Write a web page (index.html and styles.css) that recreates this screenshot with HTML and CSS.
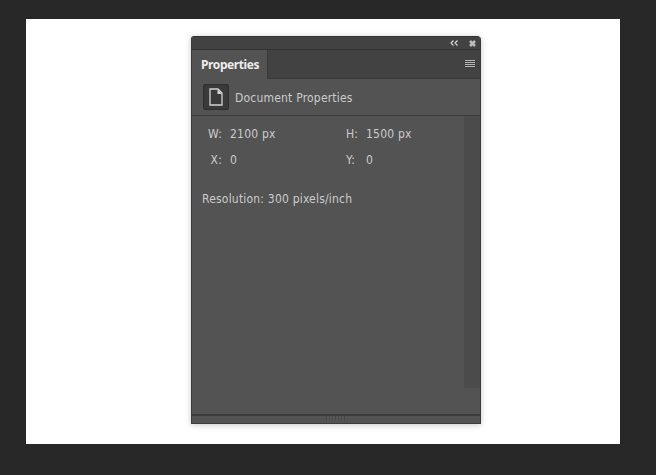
FILE: index.html
```html
<!DOCTYPE html>
<html lang="en">
<head>
<meta charset="utf-8">
<title>Properties</title>
<link rel="stylesheet" href="styles.css">
</head>
<body>
<main class="canvas">
  <section class="panel">
    <div class="titlebar">
      <svg class="ico" width="8" height="6" viewBox="0 0 8 6"><path d="M3.500 .5 1 3l2.500 2.500M7.500 .5 5 3l2.500 2.500" fill="none" stroke="#d8d8d8" stroke-width="1.2"/></svg>
      <svg class="ico" width="7" height="7" viewBox="0 0 7 7"><path d="M1 1l5 5M6 1 1 6" fill="none" stroke="#bdbdbd" stroke-width="2.500"/></svg>
    </div>
    <div class="tabs">
      <div class="tab">Properties</div>
      <svg class="menu" width="10" height="8" viewBox="0 0 10 8"><path d="M0 .5h10M0 2.500h10M0 4.500h10M0 6.500h10" stroke="#b4b4b4" stroke-width="1"/></svg>
    </div>
    <div class="head">
      <div class="docicon">
        <svg width="14" height="18" viewBox="0 0 14 18"><path d="M1 1h8l4 4v12H1z" fill="none" stroke="#d2d2d2" stroke-width="1.300"/><path d="M8.500 1v5h4.500z" fill="#d2d2d2"/></svg>
      </div>
      <span class="headtext">Document Properties</span>
    </div>
    <div class="body">
      <div class="content">
        <div class="grid">
          <span class="lbl">W:</span><span class="val">2100 px</span><span class="lbl2">H:</span><span class="val">1500 px</span>
          <span class="lbl">X:</span><span class="val">0</span><span class="lbl2">Y:</span><span class="val">0</span>
        </div>
        <p class="res">Resolution: 300 pixels/inch</p>
      </div>
      <div class="scroll"></div>
    </div>
    <div class="foot"><div class="grip"></div></div>
  </section>
</main>
</body>
</html>
```
FILE: styles.css
```css
html, body { margin: 0; padding: 0; }
body {
  width: 656px;
  height: 475px;
  overflow: hidden;
  background: #282828;
  font-family: "DejaVu Sans Condensed", "DejaVu Sans", sans-serif;
  font-size: 12px;
  letter-spacing: .2px;
  color: #cbcbcb;
}
.canvas {
  box-sizing: border-box;
  width: 594px;
  height: 425px;
  margin: 19px 0 0 26px;
  padding: 17px 0 0 165px;
  background: #fff;
}
.panel {
  box-sizing: border-box;
  width: 290px;
  height: 388px;
  display: flex;
  flex-direction: column;
  background: #535353;
  border: 1px solid #3b3b3b;
  border-top-color: #333;
  border-radius: 3px 4px 0 0;
  box-shadow: 0 1px 6px rgba(0, 0, 0, .22);
}
.titlebar {
  height: 12px;
  flex: none;
  display: flex;
  align-items: center;
  justify-content: flex-end;
  gap: 11px;
  padding-right: 4px;
  background: #424242;
  border-bottom: 1px solid #333;
  border-radius: 3px 3px 0 0;
}
.tabs {
  height: 28px;
  flex: none;
  display: flex;
  justify-content: space-between;
  background: #424242;
  border-bottom: 1px solid #393939;
}
.tab {
  width: 76px;
  height: 29px;
  box-sizing: border-box;
  padding: 7px 0 0 9px;
  background: #535353;
  border-right: 1px solid #393939;
  font-family: "Noto Sans", sans-serif;
  font-weight: bold;
  letter-spacing: -.4px;
  line-height: 16px;
  color: #ececec;
}
.menu { margin: 10px 5px 0 0; }
.head {
  height: 37px;
  flex: none;
  display: flex;
  align-items: center;
  gap: 6px;
  padding-left: 11px;
  border-bottom: 1px solid #3c3c3c;
  box-sizing: border-box;
}
.docicon {
  width: 26px;
  height: 26px;
  display: flex;
  align-items: center;
  justify-content: center;
  background: #3a3a3a;
  border: 1px solid #2f2f2f;
  border-radius: 2px;
  box-sizing: border-box;
}
.headtext { margin-top: 2px; }
.body {
  flex: 1;
  display: flex;
  align-items: flex-start;
}
.content { flex: 1; padding: 11px 0 0 10px; }
.grid {
  display: grid;
  grid-template-columns: 20px 108px 12px auto;
  grid-auto-rows: 26px;
  column-gap: 8px;
  align-items: start;
}
.lbl { text-align: right; }
.lbl2 { text-align: left; }
.res { margin: 13px 0 0; }
.scroll {
  width: 16px;
  height: 272px;
  flex: none;
  background: #4b4b4b;
  border-radius: 0 0 0 2px;
}
.foot {
  height: 7px;
  flex: none;
  display: flex;
  justify-content: center;
  border-top: 2px solid #3b3b3b;
}
.grip {
  width: 20px;
  height: 5px;
  background: repeating-linear-gradient(90deg, #484848 0 1px, #565656 1px 3px);
}
```
